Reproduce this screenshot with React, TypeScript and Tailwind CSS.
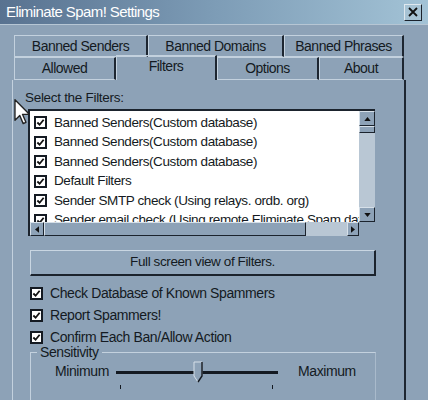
import React from "react";

const FILTERS = [
  "Banned Senders(Custom database)",
  "Banned Senders(Custom database)",
  "Banned Senders(Custom database)",
  "Default Filters",
  "Sender SMTP check (Using relays. ordb. org)",
  "Sender email check (Using remote Eliminate Spam database)",
];

function Check() {
  return (
    <span className="flex h-[13px] w-[13px] shrink-0 items-center justify-center border-2 border-[#141a22] bg-white">
      <svg viewBox="0 0 10 10" className="h-[9px] w-[9px]">
        <path d="M1.5 5 L4 7.5 L8.5 2" fill="none" stroke="#111" strokeWidth="2" />
      </svg>
    </span>
  );
}

function Tab({ label, w, active = false }: { label: string; w: string; active?: boolean }) {
  return (
    <div
      className={`flex items-center justify-center border-t border-l border-[#c3d1de] border-r-2 border-r-[#1d2631] ${w} ${
        active ? "h-[25px] -mt-[2px] border-b-0 pb-[4px]" : "h-full border-b border-b-[#c3d1de]"
      }`}
    >
      {label}
    </div>
  );
}

export default function App() {
  return (
    <div
      className="relative h-[400px] w-[428px] overflow-hidden bg-[#8da2b7] text-[#141a22]"
      style={{ fontFamily: '"Liberation Sans", Arial, sans-serif' }}
    >
      {/* title bar */}
      <div className="flex h-[24px] items-center justify-between bg-gradient-to-r from-[#587290] via-[#7d9cb6] to-[#a3c3d6] pl-[6px] pr-[6px]">
        <span className="text-[15px] tracking-[-0.6px] text-white">Eliminate Spam! Settings</span>
        <span className="flex h-[17px] w-[18px] items-center justify-center border border-[#dfe8ef] border-r-[#1a222c] border-b-[#1a222c] bg-[#a7c3d4]">
          <svg viewBox="0 0 10 10" className="h-[10px] w-[10px]">
            <path d="M1 1 L9 9 M9 1 L1 9" stroke="#111" strokeWidth="1.8" />
          </svg>
        </span>
      </div>
      <div className="h-px bg-[#b6c6d4]" />

      {/* tabs */}
      <div className="ml-[14px] mt-[10px] w-[390px] text-[14px] tracking-[-0.5px]">
        <div className="flex h-[22px]">
          <Tab label="Banned Senders" w="w-[134px]" />
          <Tab label="Banned Domains" w="w-[136px]" />
          <Tab label="Banned Phrases" w="w-[120px]" />
        </div>
        <div className="flex h-[23px] items-end">
          <Tab label="Allowed" w="w-[102px]" />
          <Tab label="Filters" w="w-[101px]" active />
          <Tab label="Options" w="w-[102px]" />
          <Tab label="About" w="w-[85px]" />
        </div>
      </div>

      {/* panel */}
      <div className="ml-[12px] w-[394px] border-l border-[#c3d1de] border-r-2 border-r-[#1d2631] pb-[40px] pl-[12px] pt-[10px]">
        <div className="text-[13.5px] leading-[16px] tracking-[-0.3px]">Select the Filters:</div>

        {/* list box */}
        <div className="mt-[3px] ml-[3px] h-[127px] w-[347px] border-l-2 border-t-2 border-[#1b232d] bg-white">
          <div className="flex h-[111px]">
            <div className="flex-1 overflow-hidden pt-[2px] pl-[4px]">
              {FILTERS.map((f, i) => (
                <div key={i} className="flex h-[19.5px] items-center gap-[7px] whitespace-nowrap text-[13.5px] tracking-[-0.4px]">
                  <Check />
                  <span>{f}</span>
                </div>
              ))}
            </div>
            {/* vertical scrollbar */}
            <div className="flex w-[16px] flex-col bg-[#b9c7d4]">
              <div className="flex h-[15px] items-center justify-center border border-[#d6e0e9] border-r-[#1b232d] border-b-[#1b232d] bg-[#8da2b7]">
                <svg viewBox="0 0 8 5" className="h-[4px] w-[7px]"><path d="M0 5 L4 0 L8 5Z" fill="#111" /></svg>
              </div>
              <div className="h-[7px] border border-[#d6e0e9] border-r-[#1b232d] border-b-[#1b232d] bg-[#8da2b7]" />
              <div className="flex-1" />
              <div className="flex h-[15px] items-center justify-center border border-[#d6e0e9] border-r-[#1b232d] border-b-[#1b232d] bg-[#8da2b7]">
                <svg viewBox="0 0 8 5" className="h-[4px] w-[7px]"><path d="M0 0 L4 5 L8 0Z" fill="#111" /></svg>
              </div>
            </div>
          </div>
          {/* horizontal scrollbar */}
          <div className="flex h-[14px] bg-[#8da2b7]">
            <div className="flex w-[14px] items-center justify-center border border-[#d6e0e9] border-r-[#1b232d] border-b-[#1b232d]">
              <svg viewBox="0 0 5 8" className="h-[7px] w-[4px]"><path d="M5 0 L0 4 L5 8Z" fill="#111" /></svg>
            </div>
            <div className="w-[262px] border border-[#d6e0e9] border-r-[#1b232d] border-b-[#1b232d]" />
            <div className="flex-1 bg-[#b9c7d4]" />
            <div className="flex w-[12px] items-center justify-center border border-[#d6e0e9] border-r-[#1b232d] border-b-[#1b232d]">
              <svg viewBox="0 0 5 8" className="h-[7px] w-[4px]"><path d="M0 0 L5 4 L0 8Z" fill="#111" /></svg>
            </div>
            <div className="w-[16px]" />
          </div>
        </div>

        {/* button */}
        <div className="ml-[5px] mt-[14px] flex h-[26px] w-[346px] items-center justify-center border border-[#c9d6e2] border-r-2 border-b-2 border-r-[#1b232d] border-b-[#1b232d] bg-[#91a6bb] text-[13.5px] tracking-[-0.4px]">
          Full screen view of Filters.
        </div>

        {/* options */}
        <div className="ml-[5px] mt-[10px] flex flex-col gap-[8px] text-[14px] tracking-[-0.4px]">
          {["Check Database of Known Spammers", "Report Spammers!", "Confirm Each Ban/Allow Action"].map((t) => (
            <div key={t} className="flex h-[14px] items-center gap-[7px]">
              <Check />
              <span>{t}</span>
            </div>
          ))}
        </div>

        {/* sensitivity */}
        <div className="relative ml-[5px] mt-[8px] h-[60px] w-[346px] border border-[#c3d1de] border-r-[#a9bacb]">
          <span className="absolute -top-[9px] left-[6px] bg-[#8da2b7] px-[3px] text-[14px] leading-[16px] tracking-[-0.4px]">Sensitivity</span>
          <div className="flex items-center pt-[8px] text-[14px] tracking-[-0.4px]">
            <span className="ml-[24px] w-[61px]">Minimum</span>
            <div className="relative h-[20px] w-[162px]">
              <div className="absolute left-0 right-0 top-[9px] h-[3px] bg-[#141a22]" />
              <svg viewBox="0 0 10 22" className="absolute left-[77px] top-[-1px] h-[22px] w-[10px]">
                <path d="M1 1 H9 V15 L5 21 L1 15 Z" fill="#8da2b7" stroke="#d6e0e9" strokeWidth="1" />
                <path d="M9 1 V15 L5 21" fill="none" stroke="#141a22" strokeWidth="1.5" />
              </svg>
              <div className="absolute left-[4px] top-[23px] h-[4px] w-px bg-[#141a22]" />
              <div className="absolute left-[156px] top-[23px] h-[4px] w-px bg-[#141a22]" />
            </div>
            <span className="ml-[20px]">Maximum</span>
          </div>
        </div>
      </div>

      {/* mouse cursor */}
      <svg viewBox="0 0 12 19" className="absolute left-[14px] top-[99px] h-[26px] w-[17px]">
        <path d="M0.5 0.5 V15.5 L4 12 L6.5 18 L8.5 17 L6 11.2 H11 Z" fill="white" stroke="#222" strokeWidth="1" strokeLinejoin="round" />
      </svg>
    </div>
  );
}
